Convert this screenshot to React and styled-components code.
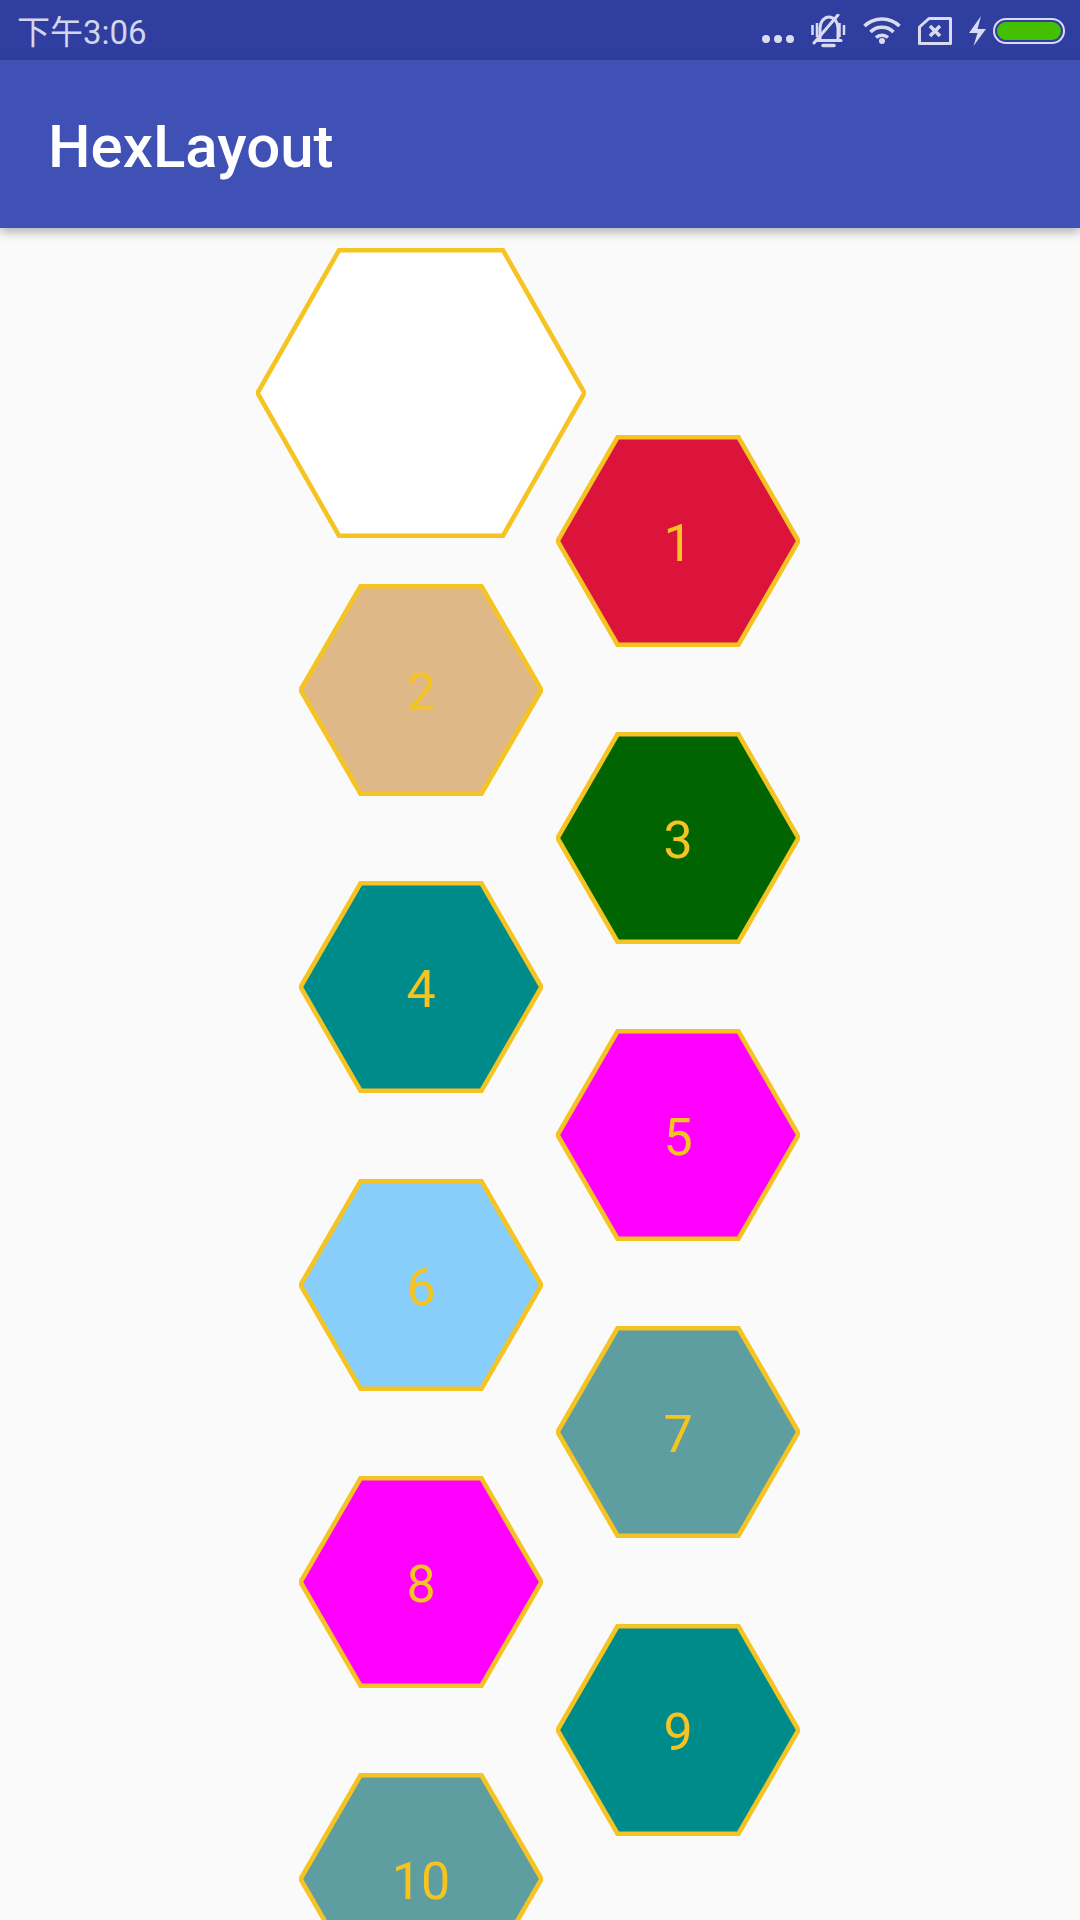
import React from 'react'
import styled, { createGlobalStyle } from 'styled-components'

const STROKE = '#F5C422'

const leftItems = [
  { id: 2, color: '#DEB887' },
  { id: 4, color: '#008B8B' },
  { id: 6, color: '#87CEFA' },
  { id: 8, color: '#FF00FF' },
  { id: 10, color: '#5F9EA0' },
]

const rightItems = [
  { id: 1, color: '#DC143C' },
  { id: 3, color: '#006400' },
  { id: 5, color: '#FF00FF' },
  { id: 7, color: '#5F9EA0' },
  { id: 9, color: '#008B8B' },
]

function Hexagon({ width, height, color, label }) {
  const inset = width / 4 + 0.5
  const points = [
    [inset, 2.3],
    [width - inset, 2.3],
    [width - 1.5, height / 2],
    [width - inset, height - 2.3],
    [inset, height - 2.3],
    [1.5, height / 2],
  ]
    .map((p) => p.join(','))
    .join(' ')

  return (
    <HexBox $width={width} $height={height}>
      <svg width={width} height={height} viewBox={`0 0 ${width} ${height}`}>
        <polygon points={points} fill={color} stroke={STROKE} strokeWidth='4.6' />
      </svg>
      {label && <HexLabel>{label}</HexLabel>}
    </HexBox>
  )
}

function App() {
  return (
    <>
      <GlobalStyle />
      <Screen>
        <StatusBar>
          <Clock>下午3:06</Clock>
          <StatusIcons>
            <DotsIcon width='32' height='8' viewBox='0 0 32 8' fill='#D9DCF0'>
              <circle cx='4' cy='4' r='4' />
              <circle cx='16' cy='4' r='4' />
              <circle cx='28' cy='4' r='4' />
            </DotsIcon>
            <svg width='35' height='34' viewBox='0 0 35 34' fill='none' stroke='#D9DCF0'>
              <path d='M9 25V14C9 8 13 3 18 3s9 5 9 11v11' strokeWidth='3' />
              <path d='M6 26.500H30' strokeWidth='3' strokeLinecap='round' />
              <path d='M12 31.500h11' strokeWidth='3.500' strokeLinecap='round' />
              <path d='M1.500 11v10M6 9v14M28.500 9v14M33 11v10' strokeWidth='2.500' />
              <path d='M3 29L27 1' strokeWidth='3' strokeLinecap='round' />
            </svg>
            <svg width='38' height='27' viewBox='0 0 38 27' fill='none' stroke='#D9DCF0' strokeWidth='3.500'>
              <path d='M1.500 9C11 -0.500 27 -0.500 36.500 9' />
              <path d='M7.500 15C13.500 8.500 24.500 8.500 30.500 15' />
              <path d='M13 20.500c3.500-3 8.500-3 12 0' />
              <circle cx='19' cy='24' r='3' fill='#D9DCF0' stroke='none' />
            </svg>
            <svg width='34' height='28' viewBox='0 0 34 28' fill='none' stroke='#D9DCF0'>
              <path d='M11 1.500H32.500V26.500H1.500V10z' strokeWidth='3' strokeLinejoin='round' />
              <path d='M12 9l10 10M22 9L12 19' strokeWidth='3.500' />
            </svg>
            <BoltIcon width='17' height='30' viewBox='0 0 17 30' fill='#D9DCF0'>
              <path d='M12 0L0 17H8.500L4.500 30L17 13H8.500z' />
            </BoltIcon>
            <svg width='72' height='26' viewBox='0 0 72 26'>
              <rect x='1' y='1' width='70' height='24' rx='12' fill='none' stroke='#D9DCF0' strokeWidth='2' />
              <rect x='4' y='4' width='64' height='18' rx='9' fill='#45C000' />
            </svg>
          </StatusIcons>
        </StatusBar>
        <AppBar>
          <Title>HexLayout</Title>
        </AppBar>
        <Canvas>
          <Column>
            <FirstHex>
              <Hexagon width={330} height={290} color='#FFFFFF' />
            </FirstHex>
            {leftItems.map((item) => (
              <Hexagon key={item.id} width={244} height={212} color={item.color} label={item.id} />
            ))}
          </Column>
          <RightColumn>
            {rightItems.map((item) => (
              <Hexagon key={item.id} width={244} height={212} color={item.color} label={item.id} />
            ))}
          </RightColumn>
        </Canvas>
      </Screen>
    </>
  )
}

const GlobalStyle = createGlobalStyle`
  html, body {
    margin: 0;
    padding: 0;
    background: #fafafa;
  }
  body {
    font-family: Roboto, "Noto Sans CJK SC", sans-serif;
  }
`

const Screen = styled.div`
  width: 1080px;
  height: 1920px;
  overflow: hidden;
  display: flex;
  flex-direction: column;
  background: #fafafa;
`

const StatusBar = styled.div`
  height: 60px;
  flex: none;
  display: flex;
  align-items: center;
  justify-content: space-between;
  padding: 0 15px 0 17px;
  background: #303f9f;
`

const Clock = styled.span`
  font-size: 33px;
  color: #d2d6ec;
`

const StatusIcons = styled.div`
  display: flex;
  align-items: center;
  gap: 17px;
  padding-top: 1px;
`

const DotsIcon = styled.svg`
  margin-top: 16px;
`

const BoltIcon = styled.svg`
  margin-right: -10px;
`

const AppBar = styled.header`
  height: 168px;
  flex: none;
  display: flex;
  align-items: center;
  padding: 4px 0 0 48px;
  box-sizing: border-box;
  background: #3f51b5;
  box-shadow: 0 4px 10px rgba(0, 0, 0, 0.3);
  position: relative;
`

const Title = styled.h1`
  margin: 0;
  font-size: 60px;
  font-weight: 500;
  color: #fff;
`

const Canvas = styled.main`
  display: flex;
  align-items: flex-start;
  gap: 13px;
  padding: 20px 0 0 299px;
`

const Column = styled.div`
  width: 244px;
  display: flex;
  flex-direction: column;
  align-items: center;
  gap: 85.300px;
`

const RightColumn = styled(Column)`
  margin-top: 186.500px;
`

const FirstHex = styled.div`
  margin: 0 -44px -39.300px;
`

const HexBox = styled.div`
  flex: none;
  display: grid;
  place-items: center;
  width: ${(p) => p.$width}px;
  height: ${(p) => p.$height}px;

  & > * {
    grid-area: 1 / 1;
  }
`

const HexLabel = styled.span`
  font-size: 52px;
  line-height: 1;
  padding-top: 6px;
  color: ${STROKE};
`

export default App
